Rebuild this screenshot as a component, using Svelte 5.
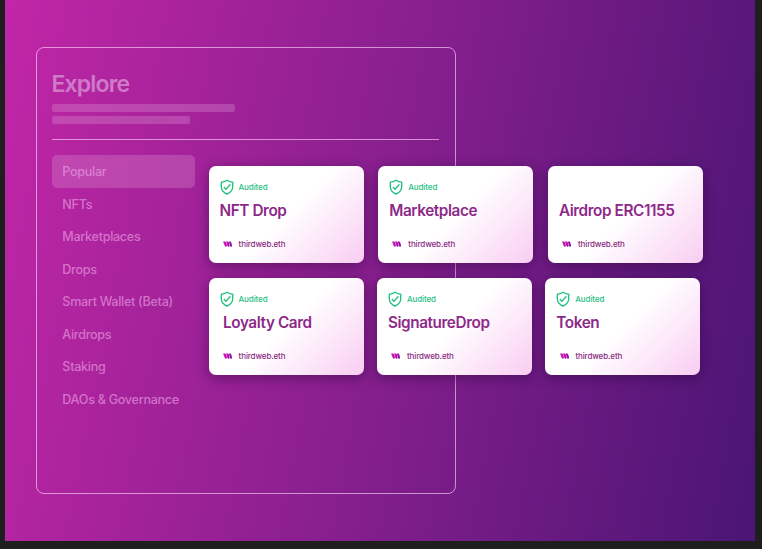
<script>
  const categories = [
    'Popular',
    'NFTs',
    'Marketplaces',
    'Drops',
    'Smart Wallet (Beta)',
    'Airdrops',
    'Staking',
    'DAOs & Governance',
  ];

  const rows = [
    {
      gap: 14.7,
      cards: [
        { title: 'NFT Drop', audited: true },
        { title: 'Marketplace', audited: true },
        { title: 'Airdrop ERC1155', audited: false },
      ],
    },
    {
      gap: 13.4,
      cards: [
        { title: 'Loyalty Card', audited: true, indent: true },
        { title: 'SignatureDrop', audited: true },
        { title: 'Token', audited: true },
      ],
    },
  ];
</script>

<div class="page">
  <main class="stage">
    <section class="panel">
      <h1>Explore</h1>
      <div class="bar long"></div>
      <div class="bar short"></div>
      <hr />
      <nav>
        {#each categories as category, i}
          <div class="item" class:active={i === 0}>{category}</div>
        {/each}
      </nav>
    </section>

    <div class="cards">
      {#each rows as row}
        <div class="row" style="gap: {row.gap}px">
          {#each row.cards as card}
            <article class="card">
              <div class="audit">
                {#if card.audited}
                  <svg class="shield" viewBox="0 0 14 16" fill="none" stroke="#20c27d" stroke-linecap="round" stroke-linejoin="round">
                    <path d="M7 1.2Q9.5 3 12.7 3.2V7.5C12.7 11.2 10.3 13.7 7 15 3.7 13.7 1.3 11.2 1.3 7.5V3.2Q4.5 3 7 1.2Z" stroke-width="1.35" />
                    <path d="M4.2 8.5 6 10.2 10 5.7" stroke-width="1.3" />
                  </svg>
                  <span>Audited</span>
                {/if}
              </div>
              <h2 class:indent={card.indent}>{card.title}</h2>
              <div class="author">
                <svg class="mark" viewBox="0 0 9 6">
                  <defs>
                    <linearGradient id="brand" gradientUnits="userSpaceOnUse" x1="0" y1="0" x2="9" y2="4">
                      <stop offset="0" stop-color="#e416b0" />
                      <stop offset="1" stop-color="#8a08ac" />
                    </linearGradient>
                  </defs>
                  <g fill="url(#brand)">
                    <path d="M0 .4H2.2Q2.7 .4 2.9 1L3.9 4.5Q4 5.7 3 5.7 2.1 5.7 1.8 4.9Z" />
                    <path d="M3 .4H4.9Q5.4 .4 5.6 1L6.5 4.5Q6.6 5.7 5.6 5.7 4.8 5.7 4.5 4.9Z" />
                    <path d="M5.8 .4H7.3Q7.9 .4 8.1 1L9 4.5Q9.1 5.7 8.1 5.7 7.3 5.7 7 4.9Z" />
                  </g>
                </svg>
                <span>thirdweb.eth</span>
              </div>
            </article>
          {/each}
        </div>
      {/each}
    </div>
  </main>
</div>

<style>
  :global(body) {
    background: #1e1e1e;
    overflow: hidden;
  }
  .page {
    width: 762px;
    height: 549px;
    box-sizing: border-box;
    padding: 0 7px 8.5px 5px;
    background: #1e1e1e;
    font-family: Inter, 'Liberation Sans', sans-serif;
  }
  .stage {
    position: relative;
    height: 540.5px;
    box-sizing: border-box;
    padding: 47px 0 0 30.5px;
    overflow: hidden;
    background: linear-gradient(101deg, #c126a7 0%, #871f8e 50%, #4a1574 100%);
  }
  .panel {
    width: 420.5px;
    height: 446.5px;
    box-sizing: border-box;
    padding: 21.5px 16px 0 15px;
    border: 1px solid rgba(255, 220, 255, 0.62);
    border-radius: 8px;
  }
  h1 {
    margin: 0;
    height: 34.5px;
    font-size: 23px;
    line-height: 28.6px;
    font-weight: 600;
    letter-spacing: -0.85px;
    color: #d079c9;
  }
  .bar {
    height: 7.5px;
    border-radius: 2px;
    background: rgba(220, 150, 210, 0.33);
  }
  .long {
    width: 183.5px;
  }
  .short {
    width: 138.5px;
    margin-top: 4.5px;
  }
  hr {
    margin: 15.1px 0 15.7px;
    border: 0;
    height: 1px;
    background: rgba(255, 205, 250, 0.65);
  }
  nav {
    width: 143.5px;
  }
  .item {
    height: 32.5px;
    box-sizing: border-box;
    padding-left: 10.8px;
    border-radius: 5px;
    font-size: 12.6px;
    line-height: 33.6px;
    font-weight: 500;
    letter-spacing: -0.3px;
    color: rgba(237, 166, 230, 0.62);
    white-space: nowrap;
  }
  .active {
    background: rgba(220, 150, 210, 0.31);
  }
  .cards {
    position: absolute;
    left: 203.5px;
    top: 166px;
    display: flex;
    flex-direction: column;
    gap: 14.6px;
  }
  .row {
    display: flex;
  }
  .card {
    width: 155px;
    height: 97px;
    flex: none;
    box-sizing: border-box;
    padding: 13px 11px 0;
    border-radius: 7px;
    background: linear-gradient(135deg, #fff 0%, #fff 50%, #f9cdf2 100%);
    box-shadow: 0 3px 12px 1px rgba(40, 5, 60, 0.42);
    white-space: nowrap;
  }
  .audit {
    display: flex;
    align-items: center;
    gap: 5px;
    height: 16px;
    color: #28c184;
    font-size: 8px;
    font-weight: 450;
    letter-spacing: -0.1px;
  }
  .shield {
    width: 14px;
    height: 16px;
  }
  h2 {
    margin: 5px 0 0;
    font-size: 15.3px;
    line-height: 22px;
    font-weight: 570;
    letter-spacing: -0.4px;
    color: #8d2989;
  }
  .indent {
    padding-left: 3.5px;
  }
  .author {
    display: flex;
    align-items: center;
    gap: 6.8px;
    height: 12px;
    margin-top: 16.3px;
    padding-left: 3.3px;
    color: #89297f;
    font-size: 8px;
    font-weight: 450;
    letter-spacing: -0.12px;
  }
  .mark {
    width: 9px;
    height: 6px;
  }
</style>
